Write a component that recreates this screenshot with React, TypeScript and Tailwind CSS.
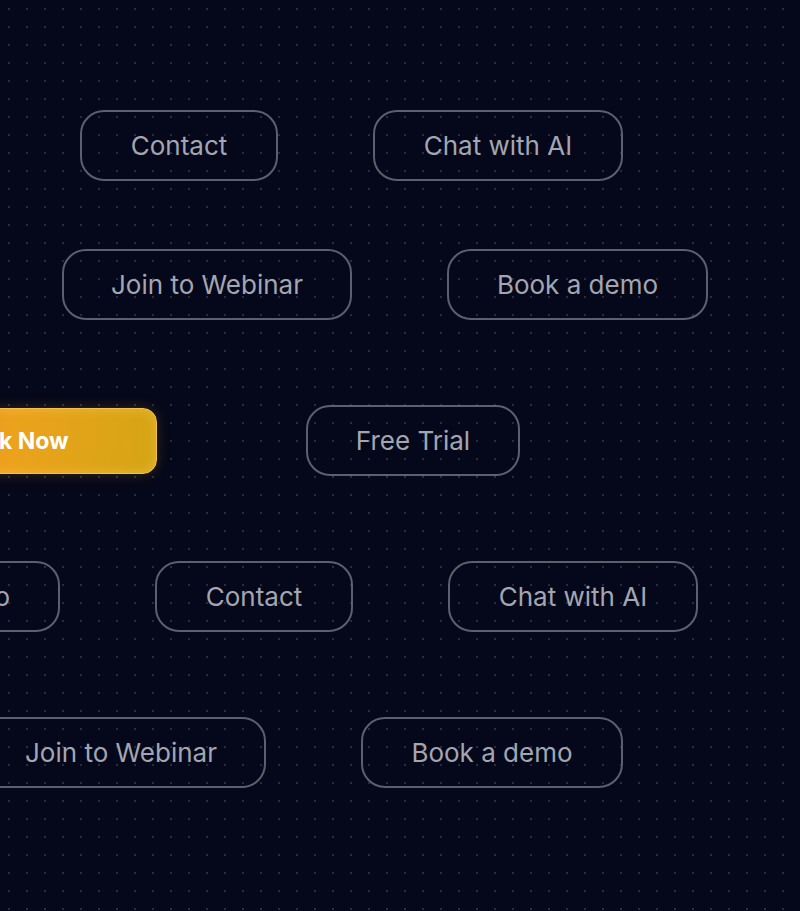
import React from "react";

const Pill = ({ label, className }: { label: string; className: string }) => (
  <button
    className={[
      "shrink-0 h-[71px] rounded-[24px] border-2 border-[#5c5f6c] bg-transparent text-[#a3a6b0] text-[26px]",
      className,
    ].join(" ")}
  >
    {label}
  </button>
);

const App = () => {
  return (
    <main className="w-[800px] h-[911px] overflow-hidden bg-[#05081a] bg-[radial-gradient(circle,#272c3e_1px,transparent_1.5px)] bg-[size:18px_18px] font-['Inter','Liberation_Sans',sans-serif]">
      <div className="flex gap-[95px] pt-[110px] ml-[80px]">
        <Pill label="Contact" className="w-[198px]" />
        <Pill label="Chat with AI" className="w-[250px]" />
      </div>
      <div className="flex gap-[95px] pt-[68px] ml-[62px]">
        <Pill label="Join to Webinar" className="w-[290px]" />
        <Pill label="Book a demo" className="w-[261px]" />
      </div>
      <div className="flex gap-[149px] pt-[85px] -ml-[133px]">
        <button className="shrink-0 w-[290px] h-[66px] mt-[3px] rounded-[14px] border border-[#f3c14a] bg-[linear-gradient(100deg,#ee7f22_0%,#eca21d_50%,#d4a514_100%)] text-white text-[23px] font-bold shadow-[inset_0_0_12px_rgba(255,220,120,0.35),0_0_14px_rgba(240,160,30,0.2)]">
          Book Now
        </button>
        <Pill label="Free Trial" className="w-[214px]" />
      </div>
      <div className="flex gap-[95px] pt-[85px] -ml-[201px]">
        <Pill label="Book a demo" className="w-[261px]" />
        <Pill label="Contact" className="w-[198px]" />
        <Pill label="Chat with AI" className="w-[250px]" />
      </div>
      <div className="flex gap-[95px] pt-[85px] -ml-[24px]">
        <Pill label="Join to Webinar" className="w-[290px]" />
        <Pill label="Book a demo" className="w-[262px]" />
      </div>
    </main>
  );
};

export default App;
